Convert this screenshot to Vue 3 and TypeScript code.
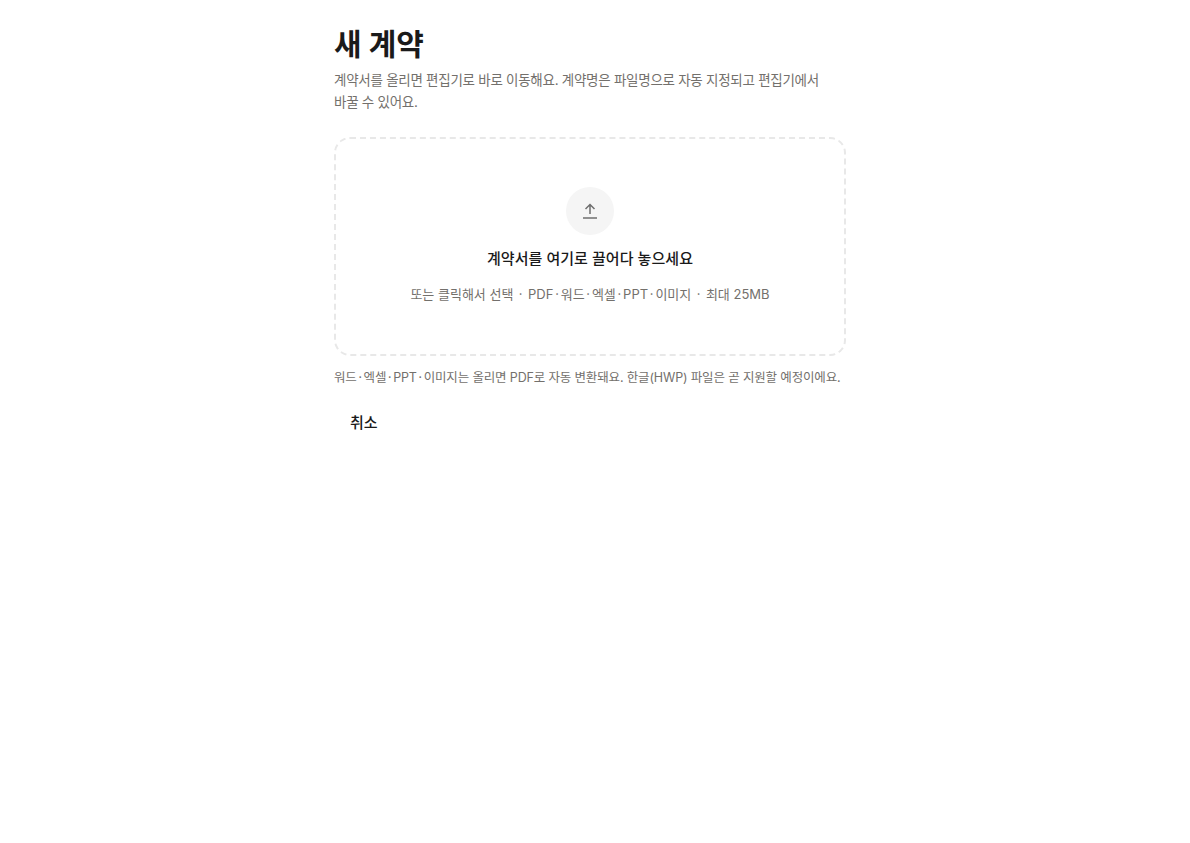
<script setup lang="ts">
</script>

<template>
  <div class="shell">
    <main class="page">
      <h1 class="title">새 계약</h1>
      <p class="desc">계약서를 올리면 편집기로 바로 이동해요. 계약명은 파일명으로 자동 지정되고 편집기에서 바꿀 수 있어요.</p>
      <section class="drop">
        <div class="circle">
          <svg width="16" height="16" viewBox="0 0 16 16" fill="none" stroke="#6f6f6f" stroke-width="1.5">
            <path d="M8 11V1.5M3.5 6 8 1.5 12.5 6M1 15h14" />
          </svg>
        </div>
        <div class="drop-title">계약서를 여기로 끌어다 놓으세요</div>
        <div class="drop-sub">또는 클릭해서 선택 <span class="dot">·</span> PDF<span class="dot">·</span>워드<span class="dot">·</span>엑셀<span class="dot">·</span>PPT<span class="dot">·</span>이미지 <span class="dot">·</span> 최대 25MB</div>
      </section>
      <p class="note">워드<span class="dot">·</span>엑셀<span class="dot">·</span>PPT<span class="dot">·</span>이미지는 올리면 PDF로 자동 변환돼요. 한글(HWP) 파일은 곧 지원할 예정이에요.</p>
      <button class="cancel" type="button">취소</button>
    </main>
  </div>
</template>

<style scoped>
.shell { padding-right: 10px; }
.page {
  width: 512px;
  margin: 0 auto;
  padding-top: 24px;
  font-family: Inter, "Noto Sans CJK KR", sans-serif;
  color: #1a1a1a;
}
.dot { font-family: "Noto Sans CJK KR", sans-serif; }
.title { margin: 0; font-size: 30px; line-height: 40px; font-weight: 700; }
.desc { margin: 5px 0 0; max-width: 490px; font-size: 13.5px; line-height: 22px; color: #73706c; letter-spacing: -0.02em; }
.drop {
  margin-top: 24px; height: 219px; box-sizing: border-box;
  border: 2px dashed #e8e8e8; border-radius: 16px;
  display: flex; flex-direction: column; align-items: center; padding-top: 48px;
}
.circle { width: 48px; height: 48px; border-radius: 50%; background: #f5f5f5; display: flex; align-items: center; justify-content: center; }
.drop-title { margin-top: 12px; font-size: 15px; line-height: 24px; font-weight: 500; letter-spacing: 0.05px; }
.drop-sub { margin-top: 11px; font-size: 13px; line-height: 24px; color: #73706c; }
.note { margin: 11px 0 0; font-size: 12.5px; line-height: 20px; color: #73706c; white-space: nowrap; letter-spacing: -0.15px; }
.cancel { display: block; margin-top: 15px; padding: 8px 16px; background: none; border: 0; font: inherit; font-size: 15px; font-weight: 500; color: #1a1a1a; }
</style>
<style>
body { background: #fff; }
</style>
